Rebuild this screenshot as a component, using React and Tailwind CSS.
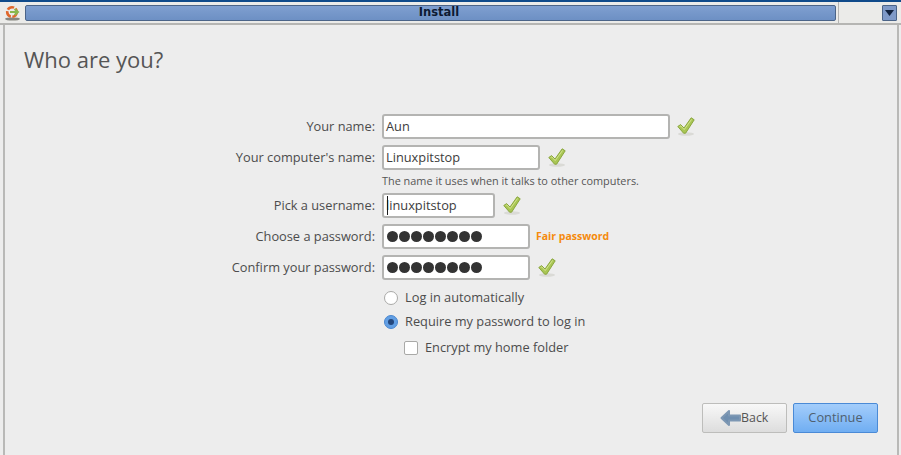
const font = { fontFamily: '"Open Sans", "Noto Sans", sans-serif' };

function Check() {
  return (
    <svg width="18" height="19" viewBox="0 0 18 19" className="shrink-0">
      <ellipse cx="9" cy="17" rx="8" ry="1.8" fill="#dadad6" />
      <path d="M0.8 9.5 L3.6 7.6 L7 11 L14.2 0.8 L17.2 2.8 L8.6 16.2 L6.6 16.2 Z" fill="#a9c654" stroke="#8aa63e" strokeWidth="1" strokeLinejoin="round" />
      <path d="M2.6 9.6 L3.8 8.9 L7.2 12.6 L14.6 2.4" fill="none" stroke="#d4e48f" strokeWidth="1" />
    </svg>
  );
}

function Dots() {
  return (
    <div className="flex gap-[1px] pl-[3px]">
      {[0, 1, 2, 3, 4, 5, 6, 7].map((i) => (
        <span key={i} className="w-[11px] h-[11px] rounded-full bg-[#333333]" />
      ))}
    </div>
  );
}

function Row({ label, width, children, after, className }) {
  return (
    <div className={"flex items-center " + (className || "")}>
      <label className="w-[375px] text-right text-[12.8px] text-[#4c4c4c] shrink-0">{label}</label>
      <div className={"ml-[7px] h-[25px] flex items-center bg-white border-2 border-[#b4b4b2] rounded-[3px] text-[12.8px] text-[#3c3c3c] " + width}>
        {children}
      </div>
      {after}
    </div>
  );
}

export default function App() {
  return (
    <div style={font} className="w-[901px] h-[455px] bg-[#ededed] flex flex-col overflow-hidden">
      {/* window title bar */}
      <div className="h-[25px] shrink-0 border-t-2 border-t-[#0f4a8a] border-b-2 border-b-[#b5b5b3] bg-[#ebebe9] flex items-center">
        <div className="w-[25px] flex justify-center shrink-0">
          <svg width="17" height="16" viewBox="0 0 17 16">
            <ellipse cx="8.5" cy="14" rx="7.5" ry="1.6" fill="#85857f" />
            <circle cx="8" cy="7" r="4.8" fill="none" stroke="#e0662a" strokeWidth="2.6" strokeDasharray="7 1.6" />
            <path d="M6 7 H13 M10.5 4 L14 7 L10.5 10" fill="none" stroke="#8ab84e" strokeWidth="2" />
          </svg>
        </div>
        <div className="w-[811px] h-[16px] bg-gradient-to-b from-[#7f9fd0] to-[#6d90c4] border border-[#4b6488] rounded-[2px] flex items-center justify-center pl-[17px]">
          <span style={{ fontFamily: '"DejaVu Sans", sans-serif' }} className="text-[11.5px] font-bold text-[#0d1a33]">Install</span>
        </div>
        <div className="ml-[2px] h-full w-[1px] bg-[#b5b5b3]" />
        <div className="ml-auto mr-[4px] w-[15px] h-[16px] bg-[#7f9ac8] border border-[#4b6488] rounded-[1px] flex items-center justify-center">
          <svg width="9" height="6" viewBox="0 0 9 6"><path d="M0 0 H9 L4.5 6 Z" fill="#12233f" /></svg>
        </div>
      </div>

      {/* page */}
      <div className="flex-1 ml-[3px] mr-[2px] border-l-2 border-l-[#b9b9b7] border-r-2 border-r-[#b9b9b7] flex flex-col">
        <h1 className="pl-[19px] pt-[18px] text-[22px] leading-[32px] text-[#555555]">Who are you?</h1>

        <div className="mt-[39px] -ml-[5px] flex flex-col">
          <Row label="Your name:" width="w-[288px]" after={<div className="ml-[7px]"><Check /></div>}>
            <span className="pl-[2px]">Aun</span>
          </Row>
          <Row label="Your computer's name:" width="w-[158px]" className="mt-[6px]" after={<div className="ml-[8px]"><Check /></div>}>
            <span className="pl-[2px]">Linuxpitstop</span>
          </Row>
          <p className="pl-[382px] mt-[3px] h-[18px] text-[10.9px] leading-[16px] text-[#555555]">The name it uses when it talks to other computers.</p>
          <Row label="Pick a username:" width="w-[113px]" className="mt-[2px]" after={<div className="ml-[8px]"><Check /></div>}>
            <span className="pl-[2px] relative">
              linuxpitstop
              <span className="absolute left-[3px] top-0 bottom-0 w-[1px] bg-[#1a1a1a]" />
            </span>
          </Row>
          <Row label="Choose a password:" width="w-[148px]" className="mt-[6px]" after={<span className="ml-[6px] text-[10.5px] font-bold text-[#f58a0c]">Fair password</span>}>
            <Dots />
          </Row>
          <Row label="Confirm your password:" width="w-[148px]" className="mt-[6px]" after={<div className="ml-[8px]"><Check /></div>}>
            <Dots />
          </Row>

          <div className="pl-[384px] mt-[5px] flex flex-col">
            <div className="h-[25px] flex items-center gap-[7px] text-[12.8px] text-[#4c4c4c]">
              <span className="w-[14px] h-[14px] rounded-full bg-white border border-[#a9a9a7]" />
              Log in automatically
            </div>
            <div className="h-[24px] flex items-center gap-[7px] text-[12.8px] text-[#4c4c4c]">
              <span className="w-[14px] h-[14px] rounded-full bg-[#629fe4] border border-[#4a87cf] flex items-center justify-center">
                <span className="w-[6px] h-[6px] rounded-full bg-[#24477c]" />
              </span>
              Require my password to log in
            </div>
            <div className="h-[28px] pl-[20px] flex items-center gap-[7px] text-[12.8px] text-[#4c4c4c]">
              <span className="w-[14px] h-[14px] rounded-[2px] bg-white border border-[#a9a9a7]" />
              Encrypt my home folder
            </div>
          </div>
        </div>

        <div className="mt-auto mb-[22px] mr-[19px] flex justify-end gap-[6px]">
          <button className="w-[85px] h-[30px] flex items-center pl-[17px] border border-[#bdbdbb] rounded-[2px] bg-gradient-to-b from-[#f8f8f8] to-[#dddddd] text-[12.4px] text-[#555555]">
            <svg width="21" height="18" viewBox="0 0 21 18" className="shrink-0">
              <path d="M1.5 9 L9 2 V6.5 H20 V11.5 H9 V16 Z" fill="#6f8eaf" stroke="#7d97b3" strokeWidth="2" strokeLinejoin="round" />
            </svg>
            Back
          </button>
          <button className="w-[85px] h-[30px] border border-[#4a8ad6] rounded-[2px] bg-gradient-to-b from-[#a3cdfb] to-[#70aef2] text-[12.8px] text-[#4f5f70]">
            Continue
          </button>
        </div>
      </div>
    </div>
  );
}
